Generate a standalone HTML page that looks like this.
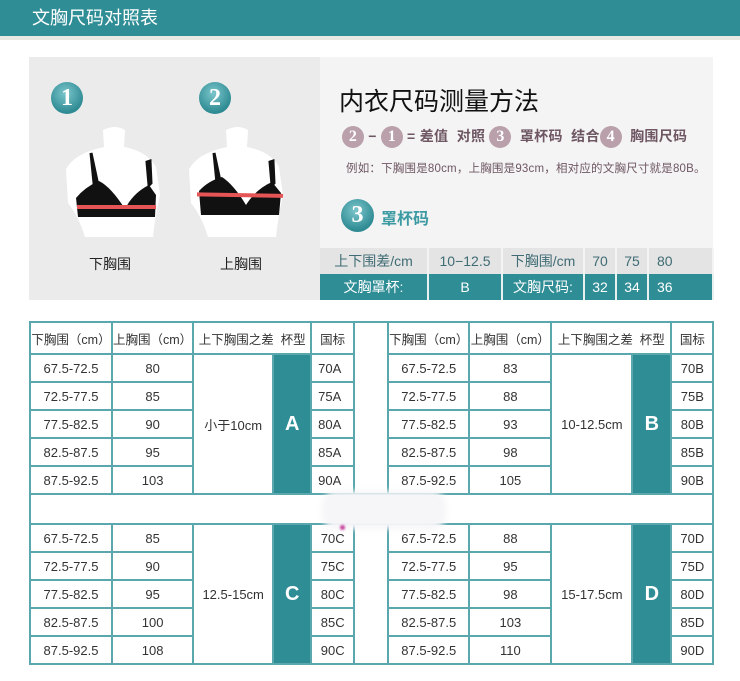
<!DOCTYPE html>
<html><head><meta charset="utf-8">
<style>
*{margin:0;padding:0;box-sizing:border-box}
body{width:740px;height:681px;background:#fff;position:relative;overflow:hidden;font-family:"Liberation Sans","Noto Sans CJK SC",sans-serif;color:#333}
.abs{position:absolute}
#hdr{left:0;top:0;width:740px;height:36px;background:#2f8d95;color:#fff;font-size:18px;line-height:36px;padding-left:32px}
#stripe{left:0;top:36px;width:740px;height:4px;background:#e9e9e4}
#pl{left:29px;top:57px;width:291px;height:243px;background:#ebebeb}
#pr{left:320px;top:57px;width:393px;height:191px;background:#f4f4f4}
.num{width:32px;height:32px;border-radius:50%;background:radial-gradient(circle at 45% 35%,#7cc6cc,#2f8b93 70%);color:#fff;font-family:"Liberation Serif",serif;font-size:24px;text-align:center;line-height:32px;font-weight:bold}
.pc{display:inline-block;width:22px;height:22px;border-radius:50%;background:#b9a0aa;color:#fff;font-family:"Liberation Serif",serif;font-size:16px;text-align:center;line-height:22px;font-weight:bold;vertical-align:middle}
table.s{position:absolute;left:320px;top:248px;border-collapse:collapse;table-layout:fixed;font-size:14px}
table.s td{height:26px;text-align:center;border-right:2px solid #f4f4f4}
table.s tr.a td{background:#e4e4e4;color:#3f6c74}
table.s tr.b td{background:#2f8d95;color:#fff;border-right:2px solid #e8f0f0}
table.m{position:absolute;left:29px;top:321px;border-collapse:collapse;table-layout:fixed;font-size:13px}
table.m td{border:2px solid #5aa8ad;height:28px;text-align:center;padding:0}
table.m tr.h td{height:32px;font-size:12.5px;white-space:nowrap}
table.m td.t{background:#2f8d95;color:#fff;font-size:20px;font-weight:bold}
table.m td.l{text-align:left;padding-left:6px}
</style></head><body>
<div id="hdr" class="abs">文胸尺码对照表</div>
<div id="stripe" class="abs"></div>
<div id="pl" class="abs"></div>
<div id="pr" class="abs"></div>
<div class="abs num" style="left:51px;top:82px">1</div>
<div class="abs num" style="left:199px;top:82px">2</div>

<svg class="abs" style="left:63px;top:125px" width="100" height="115" viewBox="0 0 100 115">
<path d="M40,5 Q52,-1 62,5 L61,22 Q84,26 93,42 L97,70 Q92,92 90,112 L22,112 Q16,92 5,78 L3,44 Q12,28 41,22 Z" fill="#fff"/>
<path d="M28,28 L34,56 L31,58 Z M84,37 L86,60 L88,58 L87,36 Z" fill="#111" stroke="#111" stroke-width="3"/>
<path d="M13,73 Q22,62 36,56 Q48,62 62,84 Q70,68 86,60 L93,70 L92,92 L60,92 L15,92 Z" fill="#111"/>
<rect x="14" y="80" width="79" height="4" fill="#e65555"/>
</svg>
<svg class="abs" style="left:186px;top:125px" width="100" height="115" viewBox="0 0 100 115">
<path d="M40,5 Q52,-1 62,5 L61,22 Q84,26 93,42 L97,70 Q92,92 90,112 L22,112 Q16,92 5,78 L3,44 Q12,28 41,22 Z" fill="#fff"/>
<path d="M28,28 L34,56 L31,58 Z M84,37 L86,60 L88,58 L87,36 Z" fill="#111" stroke="#111" stroke-width="3"/>
<path d="M13,66 Q22,56 36,52 Q48,60 60,80 Q70,64 86,57 L95,68 L93,90 L60,90 L15,90 Z" fill="#111"/>
<rect x="11" y="68" width="86" height="4" fill="#e65555" transform="rotate(1 50 70)"/>
</svg>
<div class="abs" style="left:89px;top:254px;font-size:14px;color:#222">下胸围</div>
<div class="abs" style="left:220px;top:254px;font-size:14px;color:#222">上胸围</div>

<div class="abs" style="left:339px;top:82px;font-size:25px;color:#111">内衣尺码测量方法</div>
<div class="abs" style="left:342px;top:126px;font-size:14px;font-weight:bold;color:#6e5663;white-space:nowrap;letter-spacing:0.3px">
<span class="pc">2</span> − <span class="pc">1</span> = 差值 &nbsp;对照 <span class="pc">3</span> &nbsp;罩杯码 &nbsp;结合<span class="pc">4</span> &nbsp;胸围尺码</div>
<div class="abs" style="left:346px;top:160px;font-size:11.5px;color:#6e5663;white-space:nowrap;letter-spacing:0.2px">例如：下胸围是80cm，上胸围是93cm，相对应的文胸尺寸就是80B。</div>
<div class="abs num" style="left:341px;top:199px;width:33px;height:33px">3</div>
<div class="abs" style="left:381px;top:205px;font-size:16px;font-weight:bold;color:#3b9aa2">罩杯码</div>

<table class="s">
<colgroup><col style="width:108px"><col style="width:74px"><col style="width:82px"><col style="width:32px"><col style="width:32px"><col style="width:65px"></colgroup>
<tr class="a"><td>上下围差/cm</td><td>10−12.5</td><td>下胸围/cm</td><td>70</td><td>75</td><td style="text-align:left;padding-left:8px">80</td></tr>
<tr class="b"><td>文胸罩杯:</td><td>B</td><td>文胸尺码:</td><td>32</td><td>34</td><td style="text-align:left;padding-left:8px">36</td></tr>
</table>

<table class="m">
<colgroup><col style="width:82px"><col style="width:81px"><col style="width:80px"><col style="width:38px"><col style="width:43px"><col style="width:34px"><col style="width:81px"><col style="width:82px"><col style="width:81px"><col style="width:39px"><col style="width:42px"></colgroup>
<tr class="h"><td>下胸围（cm）</td><td>上胸围（cm）</td><td colspan="2">上下胸围之差 &nbsp;杯型</td><td>国标</td><td rowspan="6"></td><td>下胸围（cm）</td><td>上胸围（cm）</td><td colspan="2">上下胸围之差 &nbsp;杯型</td><td>国标</td></tr>
<tr><td>67.5-72.5</td><td>80</td><td rowspan="5">小于10cm</td><td rowspan="5" class="t">A</td><td class="l">70A</td><td>67.5-72.5</td><td>83</td><td rowspan="5">10-12.5cm</td><td rowspan="5" class="t">B</td><td>70B</td></tr>
<tr><td>72.5-77.5</td><td>85</td><td class="l">75A</td><td>72.5-77.5</td><td>88</td><td>75B</td></tr>
<tr><td>77.5-82.5</td><td>90</td><td class="l">80A</td><td>77.5-82.5</td><td>93</td><td>80B</td></tr>
<tr><td>82.5-87.5</td><td>95</td><td class="l">85A</td><td>82.5-87.5</td><td>98</td><td>85B</td></tr>
<tr><td>87.5-92.5</td><td>103</td><td class="l">90A</td><td>87.5-92.5</td><td>105</td><td>90B</td></tr>
<tr><td colspan="11" style="height:30px"></td></tr>
<tr><td>67.5-72.5</td><td>85</td><td rowspan="5">12.5-15cm</td><td rowspan="5" class="t">C</td><td>70C</td><td rowspan="5"></td><td>67.5-72.5</td><td>88</td><td rowspan="5">15-17.5cm</td><td rowspan="5" class="t">D</td><td>70D</td></tr>
<tr><td>72.5-77.5</td><td>90</td><td>75C</td><td>72.5-77.5</td><td>95</td><td>75D</td></tr>
<tr><td>77.5-82.5</td><td>95</td><td>80C</td><td>77.5-82.5</td><td>98</td><td>80D</td></tr>
<tr><td>82.5-87.5</td><td>100</td><td>85C</td><td>82.5-87.5</td><td>103</td><td>85D</td></tr>
<tr><td>87.5-92.5</td><td>108</td><td>90C</td><td>87.5-92.5</td><td>110</td><td>90D</td></tr>
</table>
<div class="abs" style="left:322px;top:491px;width:124px;height:38px;background:#f6f5f8;border-radius:14px;filter:blur(3px)"></div>
<div class="abs" style="left:340px;top:525px;width:5px;height:5px;background:#c4409a;border-radius:50%;filter:blur(1px)"></div>
</body></html>
